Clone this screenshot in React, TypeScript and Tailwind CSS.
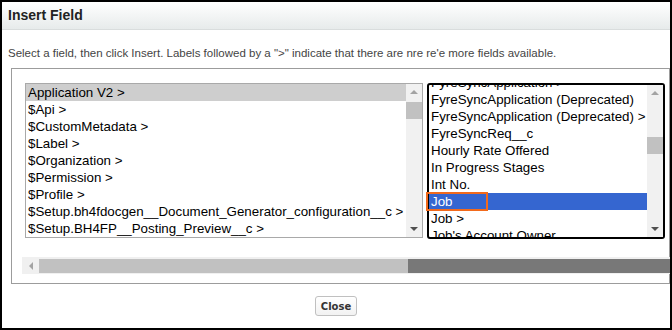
import React from 'react';

const leftFields = [
  'Application V2 >',
  '$Api >',
  '$CustomMetadata >',
  '$Label >',
  '$Organization >',
  '$Permission >',
  '$Profile >',
  '$Setup.bh4fdocgen__Document_Generator_configuration__c >',
  '$Setup.BH4FP__Posting_Preview__c >',
];

const rightFields = [
  'FyreSyncApplication >',
  'FyreSyncApplication (Deprecated)',
  'FyreSyncApplication (Deprecated) >',
  'FyreSyncReq__c',
  'Hourly Rate Offered',
  'In Progress Stages',
  'Int No.',
  'Job',
  'Job >',
  "Job's Account Owner",
];

function Arrow({ dir, color }: { dir: 'up' | 'down' | 'left'; color: string }) {
  const points = dir === 'up' ? '0,4 4,0 8,4' : dir === 'down' ? '0,0 8,0 4,4' : '4,0 4,8 0,4';
  const w = dir === 'left' ? 4 : 8;
  const h = dir === 'left' ? 8 : 4;
  return (
    <svg width={w} height={h} viewBox={`0 0 ${w} ${h}`}>
      <polygon points={points} fill={color} />
    </svg>
  );
}

function VScroll({ thumbTop }: { thumbTop: number }) {
  return (
    <div className="w-[16px] h-full bg-[#f1f1f1] flex flex-col items-center shrink-0">
      <div className="h-[16px] flex items-center justify-center">
        <Arrow dir="up" color="#a3a3a3" />
      </div>
      <div className="flex-1 w-full relative">
        <div className="absolute left-0 w-full h-[17px] bg-[#c1c1c1]" style={{ top: thumbTop }} />
      </div>
      <div className="h-[16px] flex items-center justify-center">
        <Arrow dir="down" color="#505050" />
      </div>
    </div>
  );
}

export default function App() {
  return (
    <div className="w-[672px] h-[330px] border-2 border-black bg-white font-['Liberation_Sans',Arial,sans-serif] overflow-hidden">
      {/* header */}
      <div className="h-[28px] border-b border-[#d9dddd] bg-gradient-to-b from-white to-[#e7ebeb] pl-[6px] flex items-center">
        <span className="text-[14px] font-bold text-[#222]">Insert Field</span>
      </div>

      <div className="h-[38px] pl-[6px] pt-[17px] text-[11.5px] leading-[13px] text-[#444]">
        Select a field, then click Insert. Labels followed by a "&gt;" indicate that there are nre re'e more fields available.
      </div>

      {/* field panel */}
      <div className="ml-[9px] w-[659px] h-[216px] border border-[#9c9c9c] pl-[13px] pt-[14px]">
        <div className="flex gap-[4px] h-[155px] text-[13.33px] leading-[17px] text-black">
          <div className="w-[398px] h-full border border-[#a9a9a9] flex">
            <div className="flex-1 overflow-hidden">
              {leftFields.map((f, i) => (
                <div
                  key={f}
                  className={`h-[17px] pl-[2px] whitespace-nowrap ${i === 0 ? 'bg-[#cecece]' : ''}`}
                >
                  {f}
                </div>
              ))}
            </div>
            <VScroll thumbTop={2} />
          </div>

          <div className="w-[238px] h-[156px] border-2 border-black rounded-[3px] flex relative">
            <div className="flex-1 overflow-hidden">
              <div className="mt-[-11px]">
                {rightFields.map((f) => (
                  <div
                    key={f}
                    className={`h-[17px] pl-[2px] whitespace-nowrap ${f === 'Job' ? 'bg-[#3566d0] text-white' : ''}`}
                  >
                    {f}
                  </div>
                ))}
              </div>
            </div>
            <VScroll thumbTop={36} />
            {/* highlight annotation */}
            <div className="absolute left-[-3px] top-[107px] w-[62px] h-[19px] border-2 border-[#f26a1c]" />
          </div>
        </div>

        {/* horizontal scrollbar */}
        <div className="mt-[19px] -ml-[3px] w-[650px] h-[17px] bg-[#f0f0f0] flex items-center">
          <div className="w-[17px] h-full flex items-center justify-center">
            <Arrow dir="left" color="#a3a3a3" />
          </div>
          <div className="w-[369px] h-[14px] bg-[#c1c1c1]" />
          <div className="flex-1 h-[14px] bg-[#787878]" />
        </div>
      </div>

      <div className="flex justify-center pt-[12px]">
        <button className="h-[20px] w-[42px] border border-[#c0c0c0] rounded-[3px] bg-gradient-to-b from-white to-[#f2f2f2] text-[10px] font-bold text-[#333] font-['DejaVu_Sans',Verdana,sans-serif]">
          Close
        </button>
      </div>
    </div>
  );
}
